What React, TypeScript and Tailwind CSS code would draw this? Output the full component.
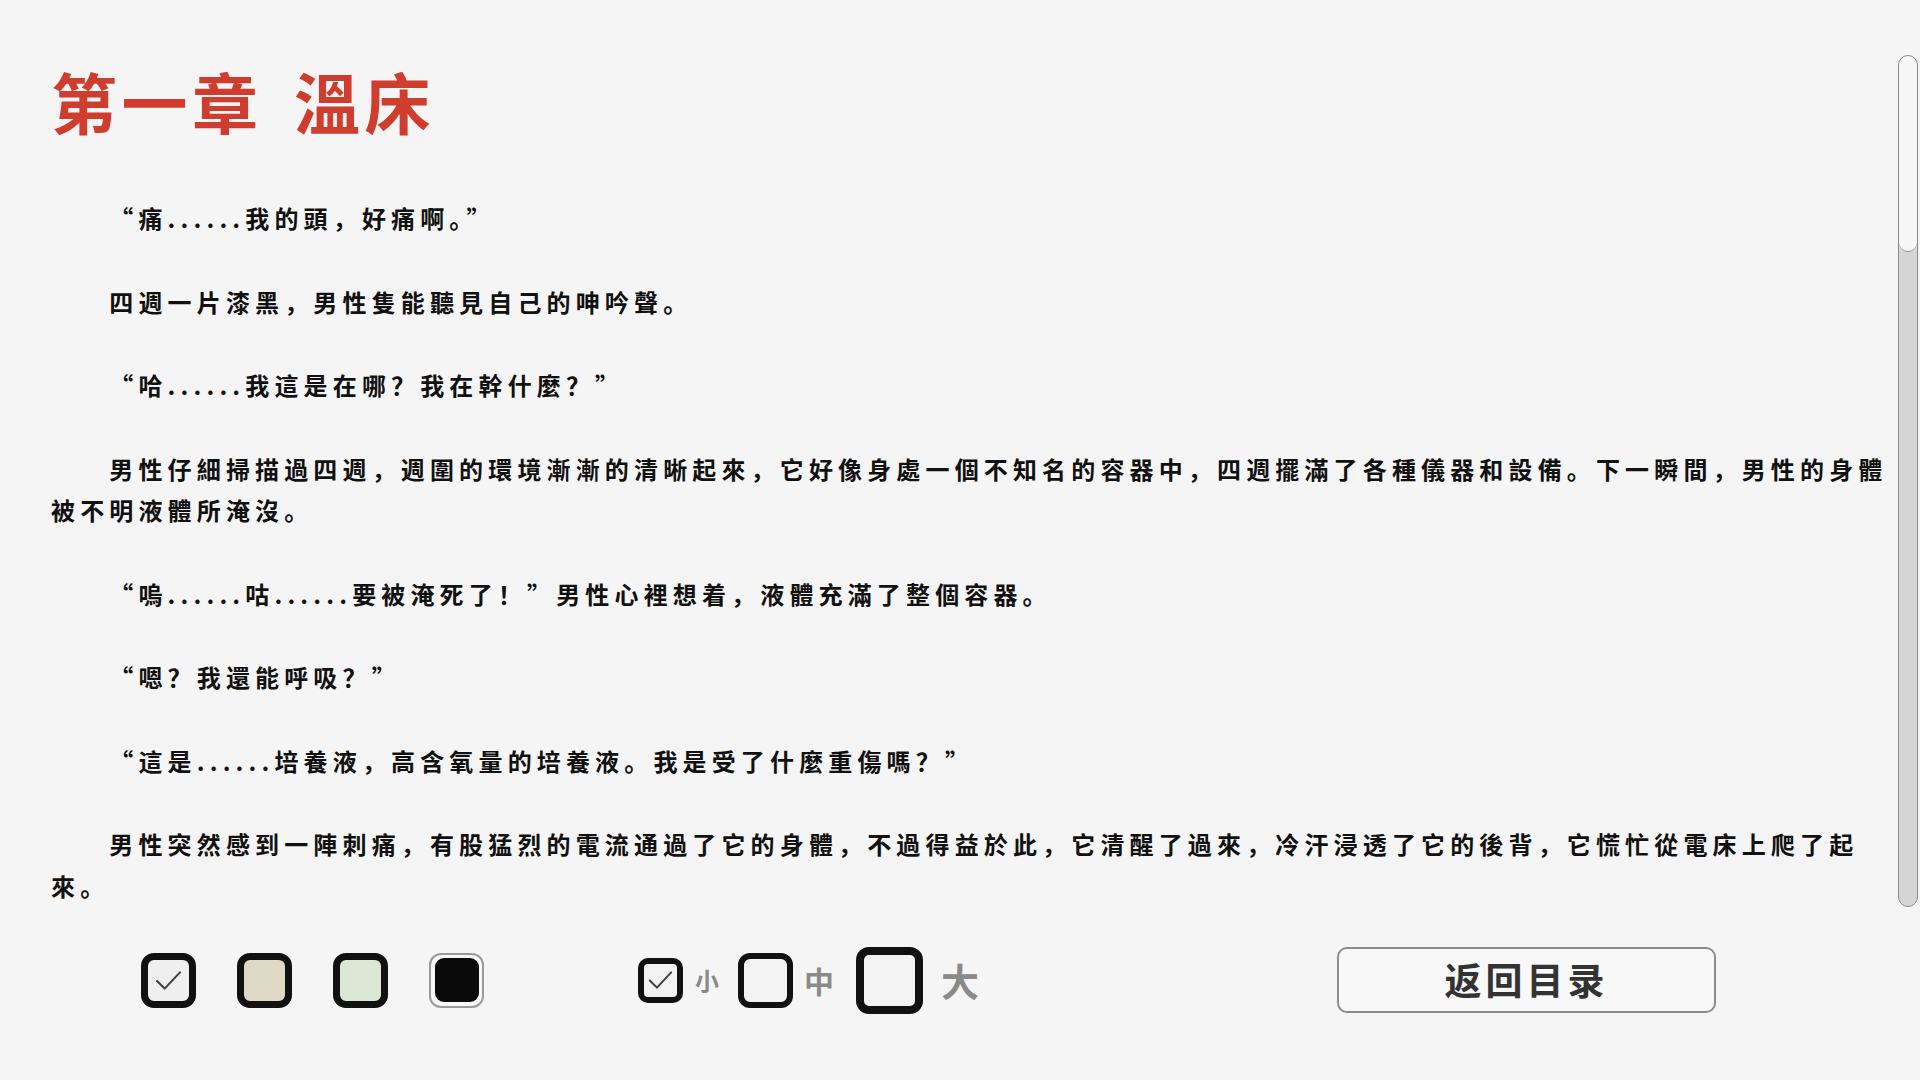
import { useState } from "react";

const PARAGRAPHS = [
  "“痛......我的頭，好痛啊。”",
  "四週一片漆黑，男性隻能聽見自己的呻吟聲。",
  "“哈......我這是在哪？我在幹什麼？”",
  "男性仔細掃描過四週，週圍的環境漸漸的清晰起來，它好像身處一個不知名的容器中，四週擺滿了各種儀器和設備。下一瞬間，男性的身體被不明液體所淹沒。",
  "“嗚......咕......要被淹死了！”男性心裡想着，液體充滿了整個容器。",
  "“嗯？我還能呼吸？”",
  "“這是......培養液，高含氧量的培養液。我是受了什麼重傷嗎？”",
  "男性突然感到一陣刺痛，有股猛烈的電流通過了它的身體，不過得益於此，它清醒了過來，冷汗浸透了它的後背，它慌忙從電床上爬了起來。",
];

const THEMES = [
  { id: "white", fill: "bg-[#efefef]" },
  { id: "paper", fill: "bg-[#ded9c5]" },
  { id: "green", fill: "bg-[#dbe7d2]" },
];

function Check({ className }: { className: string }) {
  return (
    <svg viewBox="0 0 28 22" className={className} fill="none" stroke="#404040" strokeWidth="2.2" strokeLinecap="round" strokeLinejoin="round">
      <path d="M2 11.5 10 19.5 26 2.5" />
    </svg>
  );
}

export default function App() {
  const [theme, setTheme] = useState("white");
  const [size, setSize] = useState("small");

  return (
    <div
      lang="zh-Hans"
      className="flex h-screen w-full flex-col overflow-hidden bg-[#f5f5f5] font-['Noto_Sans_CJK_SC','Noto_Sans_CJK_TC',sans-serif]"
    >
      <div className="flex h-[907px] shrink-0 pt-[55px] pl-[51px] pr-[2px]">
        <div className="min-w-0 flex-1 overflow-hidden pr-[4px]">
          <h1 className="mt-[6px] mb-[57px] text-[66px] leading-[1.2] font-bold tracking-[4.5px] text-[#cf3d2e] [word-spacing:12px]">
            第一章 溫床
          </h1>
          {PARAGRAPHS.map((text, i) => (
            <p
              key={i}
              className="mb-[41.75px] indent-[58.3px] text-[24px] leading-[41.75px] font-bold tracking-[5.15px] text-[#111]"
            >
              {text}
            </p>
          ))}
        </div>

        <div className="ml-[3px] w-[20px] shrink-0 overflow-hidden rounded-full border border-[#8a8a8a] bg-[#d6d6d6]">
          <div className="h-[196px] rounded-full border-b border-[#8a8a8a] bg-[#f7f7f7]" />
        </div>
      </div>

      <div className="flex h-[146px] shrink-0 items-center pl-[141px]">
        <div className="flex items-center gap-[41px]">
          {THEMES.map((t) => (
            <button
              key={t.id}
              onClick={() => setTheme(t.id)}
              className={`flex h-[55px] w-[55px] items-center justify-center rounded-[13px] border-[7px] border-[#111] ${t.fill}`}
            >
              {theme === t.id ? <Check className="h-[21px] w-[27px]" /> : null}
            </button>
          ))}
          <button
            onClick={() => setTheme("black")}
            className="flex h-[55px] w-[55px] items-center justify-center rounded-[12px] border-2 border-[#9a9a9a] bg-[#f7f7f7]"
          >
            <div className="flex h-[44px] w-[44px] items-center justify-center rounded-[9px] bg-[#0a0a0a]">
              {theme === "black" ? <Check className="h-[21px] w-[27px] stroke-white" /> : null}
            </div>
          </button>
        </div>

        <div className="ml-[154px] flex items-center font-bold text-[#8a8a8a]">
          <button
            onClick={() => setSize("small")}
            className="flex h-[45px] w-[45px] items-center justify-center rounded-[10px] border-[6px] border-[#111] bg-[#f3f3f3]"
          >
            {size === "small" ? <Check className="h-[20px] w-[25px]" /> : null}
          </button>
          <span className="ml-[12px] text-[24px] leading-[1.2]">小</span>
          <button
            onClick={() => setSize("medium")}
            className="ml-[19px] flex h-[55px] w-[55px] items-center justify-center rounded-[12px] border-[6px] border-[#111] bg-[#f3f3f3]"
          >
            {size === "medium" ? <Check className="h-[24px] w-[30px]" /> : null}
          </button>
          <span className="ml-[11px] text-[30px] leading-[1.2]">中</span>
          <button
            onClick={() => setSize("large")}
            className="ml-[22px] flex h-[67px] w-[67px] items-center justify-center rounded-[13px] border-[8px] border-[#111] bg-[#f3f3f3]"
          >
            {size === "large" ? <Check className="h-[28px] w-[36px]" /> : null}
          </button>
          <span className="ml-[18px] text-[38px] leading-[1.2]">大</span>
        </div>

        <button className="ml-[358px] flex h-[66px] w-[379px] items-center justify-center rounded-[10px] border-2 border-[#8c8c8c] bg-[#f8f8f8] text-[37px] font-bold tracking-[4px] text-[#333]">
          返回目录
        </button>
      </div>
    </div>
  );
}
